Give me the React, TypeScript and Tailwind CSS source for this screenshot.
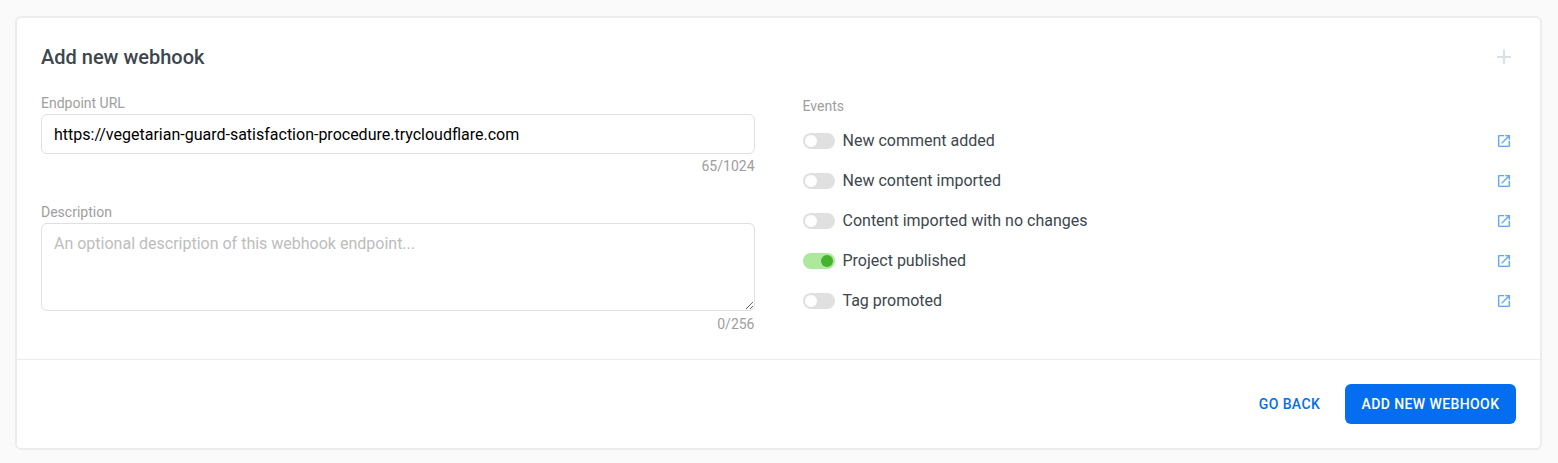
import { useState } from "react";

const initialEvents = [
  { name: "New comment added", enabled: false },
  { name: "New content imported", enabled: false },
  { name: "Content imported with no changes", enabled: false },
  { name: "Project published", enabled: true },
  { name: "Tag promoted", enabled: false },
];

function PlusIcon() {
  return (
    <svg className="size-6" viewBox="0 0 24 24" fill="currentColor">
      <path d="M19 13h-6v6h-2v-6H5v-2h6V5h2v6h6v2z" />
    </svg>
  );
}

function OpenInNewIcon() {
  return (
    <svg className="size-4" viewBox="0 0 24 24" fill="currentColor" stroke="currentColor" strokeWidth="0.2">
      <path d="M19 19H5V5h7V3H5a2 2 0 0 0-2 2v14a2 2 0 0 0 2 2h14c1.1 0 2-.9 2-2v-7h-2v7zM14 3v2h3.59l-9.83 9.83 1.41 1.41L19 6.41V10h2V3h-7z" />
    </svg>
  );
}

function Toggle({ on, label, onChange }: { on: boolean; label: string; onChange: () => void }) {
  return (
    <button
      type="button"
      role="switch"
      aria-checked={on}
      aria-label={label}
      onClick={onChange}
      className={
        on
          ? "flex h-4 w-8 items-center justify-end rounded-full bg-[#ace99c] px-0.5"
          : "flex h-4 w-8 items-center rounded-full bg-[#e0e0e0] px-0.5"
      }
    >
      <span className={on ? "size-3 rounded-full bg-[#45b32b]" : "size-3 rounded-full bg-white"} />
    </button>
  );
}

export default function App() {
  const [url, setUrl] = useState("https://vegetarian-guard-satisfaction-procedure.trycloudflare.com");
  const [description, setDescription] = useState("");
  const [events, setEvents] = useState(initialEvents);

  const toggle = (index: number) =>
    setEvents(events.map((e, i) => (i === index ? { ...e, enabled: !e.enabled } : e)));

  return (
    <div className="h-[463px] bg-[#fafafa] pt-4 pr-4 pl-[15px] font-[Roboto,sans-serif] text-[#3d464d]">
      <section className="flex h-[434px] flex-col rounded-md border-2 border-[#ececec] bg-white">
        <div className="h-[341px] px-6 pt-6">
          <header className="flex h-[30px] items-center justify-between">
            <h1 className="text-xl font-medium">Add new webhook</h1>
            <button type="button" aria-label="Add" className="text-[#dae1e6]">
              <PlusIcon />
            </button>
          </header>
          <div className="grid grid-cols-2 gap-12 pt-[21px]">
            <div className="flex flex-col">
              <label htmlFor="url" className="h-[21px] text-sm leading-5 text-[#9e9e9e]">
                Endpoint URL
              </label>
              <input
                id="url"
                value={url}
                onChange={(e) => setUrl(e.target.value)}
                className="h-10 rounded-md border border-[#e0e0e0] px-3 text-base text-black outline-none"
              />
              <div className="pt-0.5 text-right text-sm leading-5 text-[#9e9e9e]">{url.length}/1024</div>
              <label htmlFor="description" className="mt-[26px] h-[21px] text-sm leading-5 text-[#9e9e9e]">
                Description
              </label>
              <textarea
                id="description"
                value={description}
                onChange={(e) => setDescription(e.target.value)}
                placeholder="An optional description of this webhook endpoint..."
                className="h-[88px] resize-y rounded-md border border-[#e0e0e0] px-3 py-2 text-base text-black outline-none placeholder:text-[#bdbdbd]"
              />
              <div className="pt-[3px] text-right text-sm leading-5 text-[#9e9e9e]">{description.length}/256</div>
            </div>
            <div className="flex flex-col pt-[3px]">
              <h2 className="h-[25px] text-sm leading-5 text-[#9e9e9e]">Events</h2>
              <ul>
                {events.map((event, i) => (
                  <li key={event.name} className="flex h-10 items-center">
                    <Toggle on={event.enabled} label={event.name} onChange={() => toggle(i)} />
                    <span className="ml-2 grow text-base">{event.name}</span>
                    <a href="#" aria-label={"About " + event.name} className="mr-1 text-[#62a9fb]">
                      <OpenInNewIcon />
                    </a>
                  </li>
                ))}
              </ul>
            </div>
          </div>
        </div>
        <footer className="flex grow items-center justify-end border-t border-[#ececec] px-6 text-sm font-medium tracking-[0.4px]">
          <button type="button" className="mr-4 h-10 w-[79px] text-[#056ef0]">
            GO BACK
          </button>
          <button type="button" className="h-10 w-[171px] rounded-md bg-[#056ef0] text-white">
            ADD NEW WEBHOOK
          </button>
        </footer>
      </section>
    </div>
  );
}
